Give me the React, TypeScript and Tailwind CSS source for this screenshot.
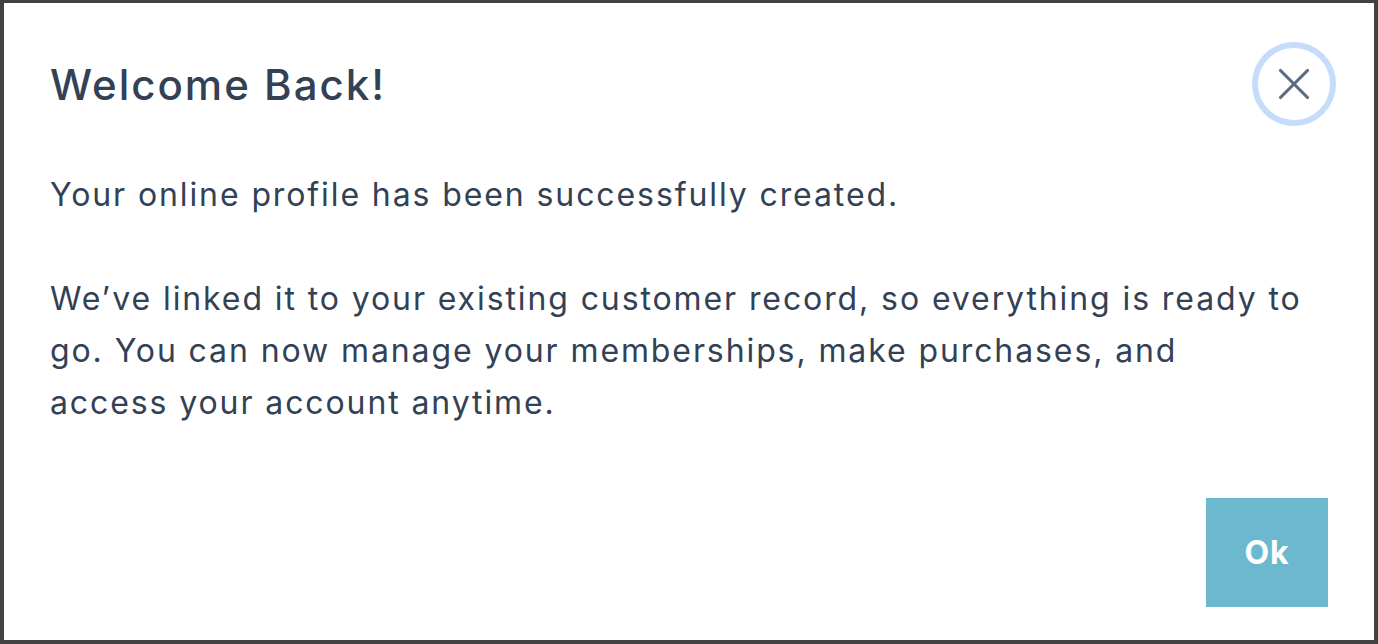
import { X } from "lucide-react";

export default function App() {
  return (
    <div className="flex h-[644px] w-full flex-col border-4 border-t-[3px] border-[#424242] bg-white font-['Inter',sans-serif] text-[#334155]">
      <div className="flex items-center justify-between pl-[46px] pr-[38px] pt-[39px]">
        <h1 className="text-[42px] font-medium tracking-[2px]">Welcome Back!</h1>
        <button
          type="button"
          aria-label="Close"
          className="flex size-[84px] items-center justify-center rounded-full border-[6px] border-[#c5ddfb] bg-white text-[#5b6b80]"
        >
          <X className="size-[54px]" strokeWidth={1.4} />
        </button>
      </div>

      <div className="mt-[43px] pl-[46px] pr-[46px] text-[32px] leading-[52px] tracking-[1.9px]">
        <p>Your online profile has been successfully created.</p>
        <p className="mt-[52px]">
          We’ve linked it to your existing customer record, so everything is ready to
          <br />
          go. You can now manage your memberships, make purchases, and
          <br />
          access your account anytime.
        </p>
      </div>

      <div className="mt-auto flex justify-end pb-[33px] pr-[46px]">
        <button
          type="button"
          className="h-[109px] w-[122px] bg-[#6cb8cf] text-[32px] font-bold tracking-[1px] text-white"
        >
          Ok
        </button>
      </div>
    </div>
  );
}
